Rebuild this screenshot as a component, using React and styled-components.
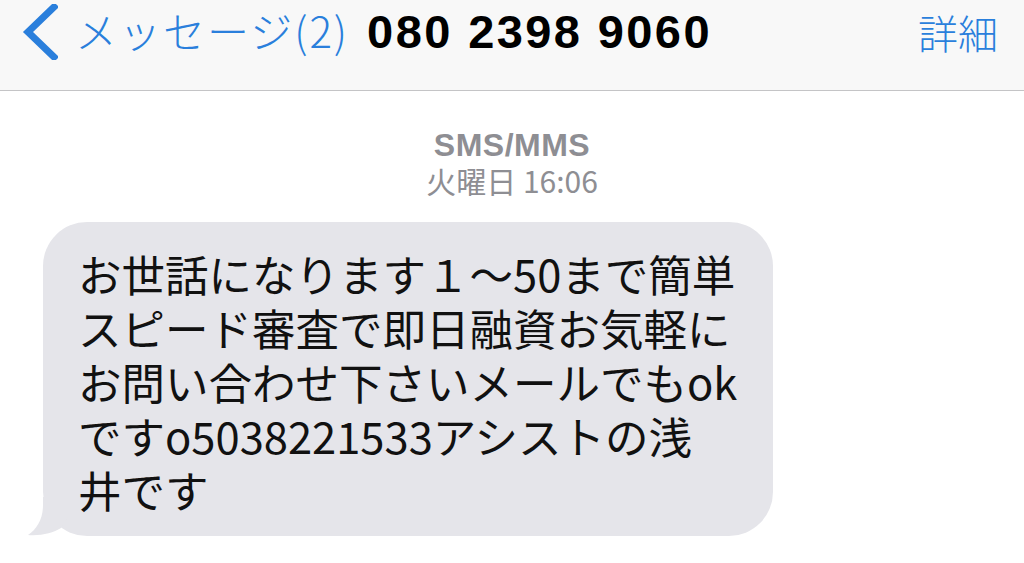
import React from "react"
import styled, { createGlobalStyle } from "styled-components"

const GlobalStyle = createGlobalStyle`
  html, body {
    margin: 0;
    padding: 0;
    background: #ffffff;
  }
  body {
    width: 1024px;
    height: 563px;
    overflow: hidden;
    font-family: "Noto Sans CJK JP", "Liberation Sans", sans-serif;
  }
`

const Screen = styled.div`
  width: 1024px;
  height: 563px;
  display: flex;
  flex-direction: column;
  background: #ffffff;
`

const NavBar = styled.header`
  height: 91px;
  flex-shrink: 0;
  box-sizing: border-box;
  border-bottom: 1px solid #c4c4c6;
  background: #f8f8f8;
  display: flex;
  align-items: flex-start;
  padding: 4px 26px 0 22px;
`

const BackButton = styled.div`
  display: flex;
  align-items: center;
  height: 56px;
  color: #2a7fdc;
`

const BackLabel = styled.span`
  margin-left: 17px;
  font-family: "Noto Sans CJK JP", sans-serif;
  font-weight: 300;
  font-size: 42px;
  letter-spacing: 2px;
  line-height: 56px;
  transform: translateY(-2px);
`

const Title = styled.h1`
  margin: 0 0 0 18px;
  font-family: "Liberation Sans", Arial, sans-serif;
  font-weight: 700;
  font-size: 47px;
  letter-spacing: 2.4px;
  line-height: 56px;
  color: #000000;
`

const Detail = styled.span`
  margin-left: auto;
  font-family: "Noto Sans CJK JP", sans-serif;
  font-weight: 300;
  font-size: 40px;
  line-height: 56px;
  color: #2a7fdc;
`

const Thread = styled.main`
  flex: 1;
  display: flex;
  flex-direction: column;
  align-items: flex-start;
  padding-top: 37px;
`

const Stamp = styled.div`
  align-self: center;
  text-align: center;
  color: #8e8e93;
  font-family: "Liberation Sans", Arial, sans-serif;
`

const Service = styled.div`
  font-weight: 700;
  font-size: 32px;
  line-height: 34px;
  letter-spacing: 0.5px;
`

const When = styled.div`
  font-family: "Noto Sans CJK JP", "Liberation Sans", sans-serif;
  font-size: 30px;
  line-height: 36px;
`

const Bubble = styled.div`
  position: relative;
  margin: 24px 0 0 43px;
  width: 730px;
  box-sizing: border-box;
  padding: 25px 20px 19px 35px;
  background: #e5e5ea;
  border-radius: 44px;
  color: #111111;
  font-family: "Noto Sans CJK JP", sans-serif;
  font-weight: 400;
  font-size: 43.5px;
  line-height: 54px;
`

const Tail = styled.svg`
  position: absolute;
  left: -20px;
  bottom: -1px;
  width: 45px;
  height: 40px;
`

function BackChevron() {
  return (
    <svg width="36" height="56" viewBox="0 0 36 56">
      <path
        d="M32 3 L6 28 L32 53"
        fill="none"
        stroke="currentColor"
        strokeWidth="7"
        strokeLinecap="square"
        strokeLinejoin="miter"
      />
    </svg>
  )
}

const lines = [
  "お世話になります１～50まで簡単",
  "スピード審査で即日融資お気軽に",
  "お問い合わせ下さいメールでもok",
  "ですo5038221533アシストの浅",
  "井です",
]

export default function App() {
  return (
    <>
      <GlobalStyle />
      <Screen>
        <NavBar>
          <BackButton>
            <BackChevron />
            <BackLabel>メッセージ(2)</BackLabel>
          </BackButton>
          <Title>080 2398 9060</Title>
          <Detail>詳細</Detail>
        </NavBar>
        <Thread>
          <Stamp>
            <Service>SMS/MMS</Service>
            <When>火曜日 16:06</When>
          </Stamp>
          <Bubble>
            <Tail viewBox="0 0 45 40">
              <path
                d="M20 0 L20 8 C20 22 14 32 5 38 C18 39 30 36 38 31 L45 20 L45 0 Z"
                fill="#e5e5ea"
              />
            </Tail>
            {lines.map((line, i) => (
              <div key={i}>{line}</div>
            ))}
          </Bubble>
        </Thread>
      </Screen>
    </>
  )
}
